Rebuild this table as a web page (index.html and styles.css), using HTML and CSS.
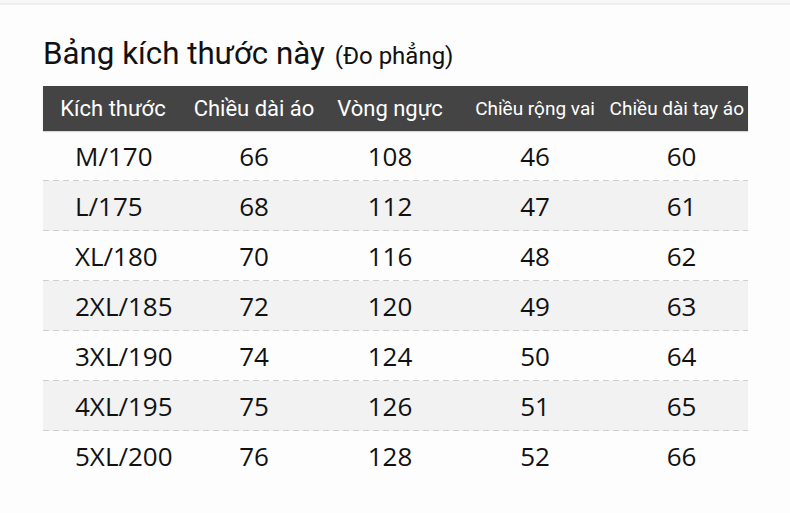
FILE: index.html
```html
<!DOCTYPE html>
<html lang="vi">
<head>
<meta charset="utf-8">
<title>Bảng kích thước</title>
<link rel="stylesheet" href="styles.css">
</head>
<body>
<div class="topline"></div>
<main class="page">
  <h1 class="title">Bảng kích thước này <span class="sub">(Đo phẳng)</span></h1>
  <div class="table">
    <div class="row head">
      <div class="cell">Kích thước</div>
      <div class="cell">Chiều dài áo</div>
      <div class="cell">Vòng ngực</div>
      <div class="cell small">Chiều rộng vai</div>
      <div class="cell small last-col">Chiều dài tay áo</div>
    </div>
    <div class="row">
      <div class="cell size">M/170</div><div class="cell">66</div><div class="cell">108</div><div class="cell">46</div><div class="cell">60</div>
    </div>
    <div class="row alt">
      <div class="cell size">L/175</div><div class="cell">68</div><div class="cell">112</div><div class="cell">47</div><div class="cell">61</div>
    </div>
    <div class="row">
      <div class="cell size">XL/180</div><div class="cell">70</div><div class="cell">116</div><div class="cell">48</div><div class="cell">62</div>
    </div>
    <div class="row alt">
      <div class="cell size">2XL/185</div><div class="cell">72</div><div class="cell">120</div><div class="cell">49</div><div class="cell">63</div>
    </div>
    <div class="row">
      <div class="cell size">3XL/190</div><div class="cell">74</div><div class="cell">124</div><div class="cell">50</div><div class="cell">64</div>
    </div>
    <div class="row alt">
      <div class="cell size">4XL/195</div><div class="cell">75</div><div class="cell">126</div><div class="cell">51</div><div class="cell">65</div>
    </div>
    <div class="row last">
      <div class="cell size">5XL/200</div><div class="cell">76</div><div class="cell">128</div><div class="cell">52</div><div class="cell">66</div>
    </div>
  </div>
</main>
</body>
</html>
```

FILE: styles.css
```css
html, body {
  margin: 0;
  padding: 0;
  background: #fdfdfd;
}
body {
  width: 790px;
  height: 513px;
  overflow: hidden;
  font-family: "Open Sans", "Noto Sans", sans-serif;
}
.topline {
  height: 3px;
  border-bottom: 2px solid #eeeeee;
  background: #f7f7f7;
}
.page {
  padding: 32px 0 0 43px;
  width: 705px;
}
.title {
  margin: 0 0 13px;
  font-family: Roboto, "Liberation Sans", sans-serif;
  font-weight: 400;
  font-size: 31.3px;
  line-height: 34px;
  color: #111;
  letter-spacing: 0;
  white-space: nowrap;
}
.title .sub {
  font-size: 24px;
  margin-left: 2px;
}
.table {
  display: flex;
  flex-direction: column;
}
.row {
  display: grid;
  grid-template-columns: 140px 142px 130px 160px 133px;
  height: 50px;
  align-items: center;
  background: repeating-linear-gradient(90deg, #cfcfcf 0 6px, transparent 6px 10px) left bottom / 100% 1px no-repeat;
}
.row.alt {
  background: repeating-linear-gradient(90deg, #cfcfcf 0 6px, transparent 6px 10px) left bottom / 100% 1px no-repeat, #f2f2f2;
}
.row.last {
  background: none;
}
.row.head {
  height: 45px;
  background: #444444;
  color: #fff;
  font-family: Roboto, "Liberation Sans", sans-serif;
  box-shadow: 0 1px 1px rgba(0,0,0,0.15);
}
.cell {
  text-align: center;
  font-size: 26px;
  color: #111;
}
.head .cell {
  font-size: 22px;
  color: #fff;
  white-space: nowrap;
}
.head .cell.small {
  font-size: 19px;
}
.head .cell.last-col {
  margin-left: -8px;
  text-align: right;
  padding-right: 4px;
}
.cell.size {
  text-align: left;
  padding-left: 32px;
}
```
